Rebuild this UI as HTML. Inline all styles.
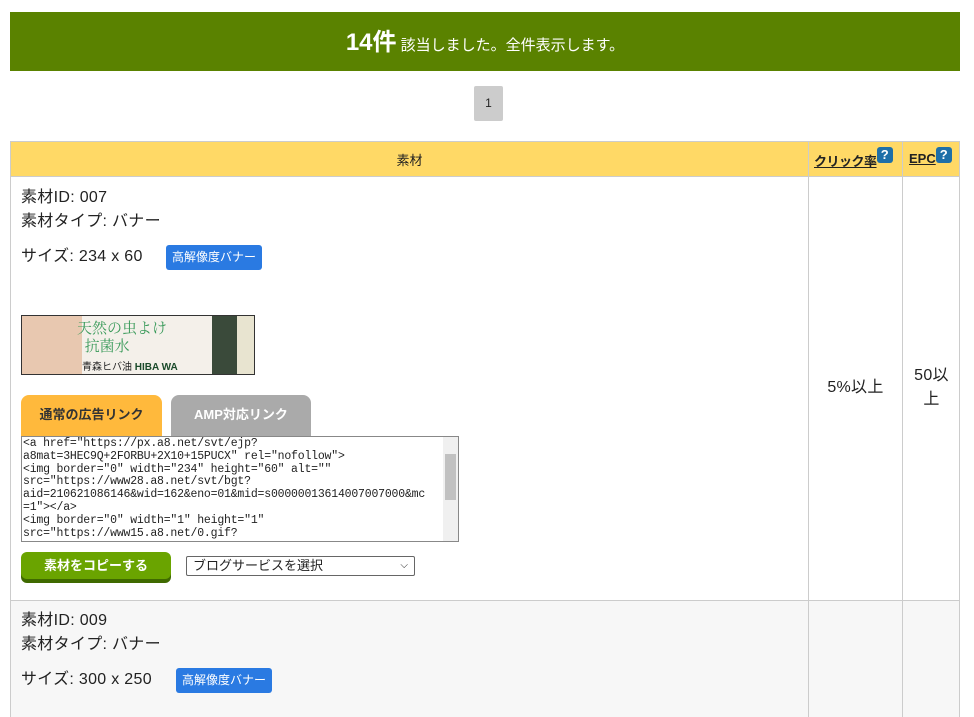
<!DOCTYPE html>
<html><head><meta charset="utf-8"><style>
*{box-sizing:border-box;margin:0;padding:0}
body{width:974px;height:717px;overflow:hidden;background:#fff;font-family:"Liberation Sans","Noto Sans CJK JP",sans-serif;color:#222;position:relative}
.a{position:absolute}
.q{display:inline-block;width:16px;height:16px;background:#1e6fa8;color:#fff;border-radius:3px;font-size:13px;font-weight:bold;text-align:center;line-height:16px;vertical-align:top;margin-top:-4px}
.t{font-size:16px;line-height:24px;letter-spacing:0.3px}
.hb{background:#2a7ae2;color:#fff;font-size:12px;border-radius:3px;padding:0 6px;line-height:25px;height:25px}
</style></head><body>
<div class="a" style="left:10px;top:12px;width:950px;height:59px;background:#5a8200;color:#fff;text-align:center;line-height:62px;font-size:15px"><b style="font-size:24px">14件</b> 該当しました。全件表示します。</div>
<div class="a" style="left:474px;top:86px;width:29px;height:35px;background:#ccc;border-radius:2px;text-align:center;line-height:35px;font-size:12px">1</div>
<div class="a" style="left:10px;top:141px;width:950px;height:576px;border:1px solid #ccc"></div>
<div class="a" style="left:11px;top:142px;width:948px;height:35px;background:#ffd966;border-bottom:1px solid #ccc"></div>
<div class="a" style="left:11px;top:600px;width:948px;height:117px;background:#f7f7f7;border-top:1px solid #ccc"></div>
<div class="a" style="left:808px;top:142px;width:1px;height:575px;background:#ccc"></div>
<div class="a" style="left:902px;top:142px;width:1px;height:575px;background:#ccc"></div>
<div class="a" style="left:11px;top:150px;width:797px;text-align:center;font-size:13px">素材</div>
<div class="a" style="left:814px;top:151px;font-size:13px;font-weight:bold;text-decoration:underline;letter-spacing:-0.5px">クリック率<span class="q">?</span></div>
<div class="a" style="left:909px;top:151px;font-size:13px;font-weight:bold;text-decoration:underline">EPC<span class="q">?</span></div>
<div class="a t" style="left:21px;top:186px">素材ID: 007<br>素材タイプ: バナー</div>
<div class="a t" style="left:21px;top:245px">サイズ: 234 x 60</div>
<div class="a hb" style="left:166px;top:245px">高解像度バナー</div>
<div class="a" style="left:21px;top:315px;width:234px;height:60px;border:1px solid #333;background:linear-gradient(90deg,#e8c8b0 0 60px,#f4f0ea 60px 190px,#3a4a3a 190px 215px,#e8e4d0 215px)"><span style="position:absolute;left:55px;top:3px;color:#3a9a5a;font-size:15px;font-family:'Noto Serif CJK SC',serif;line-height:18px">天然の虫よけ<br>&nbsp;&nbsp;抗菌水</span><span style="position:absolute;left:60px;top:42px;font-size:10px;color:#222">青森ヒバ油 <b style="color:#1a4a2a">HIBA WA</b></span></div>
<div class="a" style="left:21px;top:395px;width:141px;height:41px;background:#ffb93c;border-radius:8px 8px 0 0;text-align:center;line-height:40px;font-size:13px;font-weight:bold;color:#333">通常の広告リンク</div>
<div class="a" style="left:171px;top:395px;width:140px;height:41px;background:#aaa;border-radius:8px 8px 0 0;text-align:center;line-height:40px;font-size:13px;font-weight:bold;color:#fff">AMP対応リンク</div>
<div class="a" style="left:21px;top:436px;width:438px;height:106px;border:1px solid #888;background:#fff;font-family:'Liberation Mono',monospace;font-size:11.5px;line-height:12.8px;padding:1px 18px 0 1px;overflow:hidden;white-space:pre;letter-spacing:-0.2px">&lt;a href="https://px.a8.net/svt/ejp?
a8mat=3HEC9Q+2FORBU+2X10+15PUCX" rel="nofollow"&gt;
&lt;img border="0" width="234" height="60" alt=""
src="https://www28.a8.net/svt/bgt?
aid=210621086146&amp;wid=162&amp;eno=01&amp;mid=s00000013614007007000&amp;mc
=1"&gt;&lt;/a&gt;
&lt;img border="0" width="1" height="1"
src="https://www15.a8.net/0.gif?</div>
<div class="a" style="left:443px;top:437px;width:15px;height:104px;background:#f0f0f0"><div style="margin:17px 2px 0;height:46px;background:#c1c1c1"></div></div>
<div class="a" style="left:21px;top:552px;width:150px;height:27px;background:#6aa400;border-radius:6px;box-shadow:0 4px 0 #3f6a00;color:#fff;font-weight:bold;font-size:13px;text-align:center;line-height:27px">素材をコピーする</div>
<div class="a" style="left:186px;top:556px;width:229px;height:20px;border:1px solid #666;border-radius:2px;font-size:13px;line-height:18px;padding-left:6px">ブログサービスを選択<span style="position:absolute;right:6px;font-size:10px">&#x2335;</span></div>
<div class="a t" style="left:809px;top:376px;width:93px;text-align:center">5%以上</div>
<div class="a t" style="left:903px;top:364px;width:57px;text-align:center">50以<br>上</div>
<div class="a t" style="left:21px;top:609px">素材ID: 009<br>素材タイプ: バナー</div>
<div class="a t" style="left:21px;top:668px">サイズ: 300 x 250</div>
<div class="a hb" style="left:176px;top:668px">高解像度バナー</div>
</body></html>
